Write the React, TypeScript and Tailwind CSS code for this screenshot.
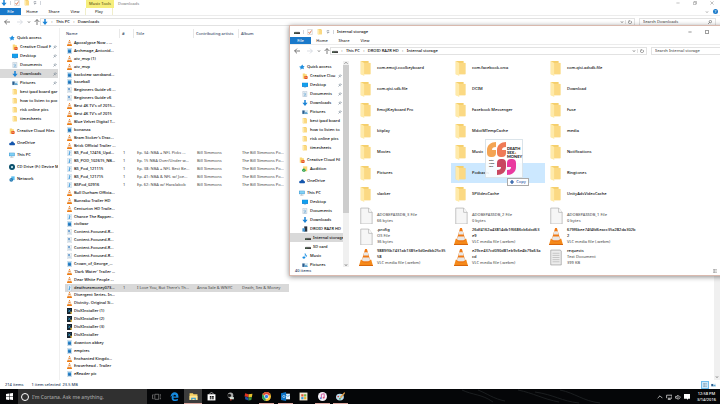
import type { ReactNode } from "react";
import clsx from "clsx";

/* TYPES */
type IconName =
  | "star" | "cloudFolder" | "desktop" | "doc" | "download" | "pictures" | "folder"
  | "onedrive" | "pc" | "cd" | "network" | "audition" | "phone" | "drive" | "music"
  | "vlc" | "image" | "word" | "audio" | "divx" | "check" | "page" | "textPage";

type TreeItem = {
  icon: IconName;
  label: string;
  level?: number;
  pin?: boolean;
  active?: boolean;
  gap?: boolean;
};

type FileRow = {
  icon: IconName;
  name: string;
  title?: string;
  artist?: string;
  album?: string;
  active?: boolean;
};

type Tile = {
  icon: IconName;
  name: string;
  meta?: string[];
  active?: boolean;
};

/* DATA */
const quickAccess: TreeItem[] = [
  { icon: "star", label: "Quick access" },
  { icon: "cloudFolder", label: "Creative Cloud F", level: 1, pin: true },
  { icon: "desktop", label: "Desktop", level: 1, pin: true },
  { icon: "doc", label: "Documents", level: 1, pin: true },
  { icon: "download", label: "Downloads", level: 1, pin: true },
  { icon: "pictures", label: "Pictures", level: 1, pin: true },
  { icon: "folder", label: "best ipad board gar", level: 1 },
  { icon: "folder", label: "how to listen to poc", level: 1 },
  { icon: "folder", label: "risk online pics", level: 1 },
  { icon: "folder", label: "timesheets", level: 1 },
  { icon: "cloudFolder", label: "Creative Cloud Files", gap: true },
];

const downloadsTree: TreeItem[] = [
  ...quickAccess.map((item) => ({ ...item, active: item.label === "Downloads" })),
  { icon: "onedrive", label: "OneDrive", gap: true },
  { icon: "pc", label: "This PC", gap: true },
  { icon: "cd", label: "CD Drive (F:) Device M", gap: true },
  { icon: "network", label: "Network", gap: true },
];

const shortLabels: Record<string, string> = {
  "Creative Cloud F": "Creative Clou",
  "best ipad board gar": "best ipad board",
  "how to listen to poc": "how to listen to",
  "Creative Cloud Files": "Creative Cloud Fil",
};

const storageTree: TreeItem[] = [
  ...quickAccess.map((item) => ({ ...item, label: shortLabels[item.label] ?? item.label })),
  { icon: "audition", label: "Audition", level: 1 },
  { icon: "onedrive", label: "OneDrive", gap: true },
  { icon: "pc", label: "This PC", gap: true },
  { icon: "desktop", label: "Desktop", level: 1 },
  { icon: "doc", label: "Documents", level: 1 },
  { icon: "download", label: "Downloads", level: 1 },
  { icon: "phone", label: "DROID RAZR HD", level: 1 },
  { icon: "drive", label: "Internal storage", level: 2, active: true },
  { icon: "drive", label: "SD card", level: 2 },
  { icon: "music", label: "Music", level: 1 },
  { icon: "pictures", label: "Pictures", level: 1 },
];

const files: FileRow[] = [
  { icon: "vlc", name: "Apocalypse Now - ..." },
  { icon: "image", name: "Archmage_Antonid..." },
  { icon: "vlc", name: "atv_mvp (1)" },
  { icon: "vlc", name: "atv_mvp" },
  { icon: "image", name: "backview sansband..." },
  { icon: "image", name: "baseball" },
  { icon: "word", name: "Beginners Guide v6 ..." },
  { icon: "word", name: "Beginners Guide v6" },
  { icon: "vlc", name: "Best 4K TV's of 2015..." },
  { icon: "vlc", name: "Best 4K TV's of 2015" },
  { icon: "vlc", name: "Blue Velvet Digital T..." },
  { icon: "image", name: "bonanza" },
  { icon: "vlc", name: "Bram Stoker's Drac..." },
  { icon: "vlc", name: "Brick Official Trailer ..." },
  { icon: "audio", name: "BS_Pod_12416_Upd...", title: "Ep. 34: NBA + NFL Picks ...", artist: "Bill Simmons", album: "The Bill Simmons Po..." },
  { icon: "audio", name: "BS_POD_102615_NB...", title: "Ep. 15 NBA Over/Under w...", artist: "Bill Simmons", album: "The Bill Simmons Po..." },
  { icon: "audio", name: "BS_Pod_121115", title: "Ep. 38: NBA + NFL Best Be...", artist: "Bill Simmons", album: "The Bill Simmons Po..." },
  { icon: "audio", name: "BS_Pod_121715", title: "Ep. 41: NBA & NFL w/ Joe...", artist: "Bill Simmons", album: "The Bill Simmons Po..." },
  { icon: "audio", name: "BSPod_02916", title: "Ep. 62: NBA w/ Haralabob", artist: "Bill Simmons", album: "The Bill Simmons Po..." },
  { icon: "vlc", name: "Bull Durham Officia..." },
  { icon: "vlc", name: "Bunraku Trailer HD" },
  { icon: "vlc", name: "Centurion HD Traile..." },
  { icon: "audio", name: "Chance The Rapper..." },
  { icon: "image", name: "civilwar" },
  { icon: "word", name: "Content-Focused-R..." },
  { icon: "word", name: "Content-Focused-R..." },
  { icon: "word", name: "Content-Focused-R..." },
  { icon: "word", name: "Content-Focused-R..." },
  { icon: "image", name: "Crown_of_George_..." },
  { icon: "vlc", name: "'Dark Water' Trailer ..." },
  { icon: "vlc", name: "Dear White People ..." },
  { icon: "audio", name: "deathsexmoney073...", title: "I Love You, But There's Th...", artist: "Anna Sale & WNYC", album: "Death, Sex & Money", active: true },
  { icon: "vlc", name: "Divergent Series- In..." },
  { icon: "vlc", name: "Divinity- Original Si..." },
  { icon: "divx", name: "DivXInstaller (1)" },
  { icon: "divx", name: "DivXInstaller (2)" },
  { icon: "divx", name: "DivXInstaller (3)" },
  { icon: "divx", name: "DivXInstaller" },
  { icon: "image", name: "downton abbey" },
  { icon: "image", name: "empires" },
  { icon: "vlc", name: "Enchanted Kingdo..." },
  { icon: "vlc", name: "Eraserhead - Trailer" },
  { icon: "image", name: "eReader pic" },
];

const tiles: Tile[] = [
  { icon: "folder", name: "com.emoji.coolkeyboard" },
  { icon: "folder", name: "com.facebook.orca" },
  { icon: "folder", name: "com.qisi.adsdk.file" },
  { icon: "folder", name: "com.qisi.sdk.file" },
  { icon: "folder", name: "DCIM" },
  { icon: "folder", name: "Download" },
  { icon: "folder", name: "EmojiKeyboard Pro" },
  { icon: "folder", name: "Facebook Messenger" },
  { icon: "folder", name: "Fuse" },
  { icon: "folder", name: "kitplay" },
  { icon: "folder", name: "MdotMTempCache" },
  { icon: "folder", name: "media" },
  { icon: "folder", name: "Movies" },
  { icon: "folder", name: "Music" },
  { icon: "folder", name: "Notifications" },
  { icon: "folder", name: "Pictures" },
  { icon: "folder", name: "Podcasts", active: true },
  { icon: "folder", name: "Ringtones" },
  { icon: "folder", name: "slacker" },
  { icon: "folder", name: "SPVideoCache" },
  { icon: "folder", name: "UnityAdsVideoCache" },
  { icon: "page", name: "", meta: ["ADOBEPASSDB_3 File", "66 bytes"] },
  { icon: "page", name: "", meta: ["ADOBEPASSDB_2 File", "0 bytes"] },
  { icon: "page", name: "", meta: ["ADOBEPASSDB_1 File", "0 bytes"] },
  { icon: "page", name: ".profig", meta: ["OS File", "36 bytes"] },
  { icon: "vlc", name: "26df4162a43814db1f6686cb6dcd63\ne9", meta: ["VLC media file (.webm)"] },
  { icon: "vlc", name: "679f6bee74f4fd6eacc35a282da302b\n2", meta: ["VLC media file (.webm)"] },
  { icon: "vlc", name: "9889f3b7431ab1385e3d0edbb25c35\n58", meta: ["VLC media file (.webm)"] },
  { icon: "vlc", name: "e29ce437cd090d81eb9c6e4b79a63a\ncd", meta: ["VLC media file (.webm)"] },
  { icon: "textPage", name: "requests", meta: ["Text Document", "399 KB"] },
];

/* ICONS */
const glyphs: Record<IconName, ReactNode> = {
  star: <path d="M9 1l2 4 4 1-3 3 1 5-5-2-4 3 0-5-4-3 5-1z" fill="#1f8fe0" />,
  cloudFolder: (
    <>
      <path d="M2 1h6l1 2h4v12H2z" fill="#fbd774" />
      <rect x="6" y="8" width="9" height="8" rx="2" fill="#e8541c" />
      <path d="M8 13c0-3 3-3 5 0" stroke="#fff" fill="none" />
    </>
  ),
  desktop: (
    <>
      <rect y="2" width="16" height="11" fill="#1085d8" />
      <path d="M1 3h14v8H1z" fill="#12a0ee" />
      <path d="M5 14h6" stroke="#2673ae" />
    </>
  ),
  doc: (
    <>
      <path d="M2 1h11v14H2z" fill="#e9eff4" stroke="#9fb2c2" />
      <path d="M5 11c5 1 6-5 3-6-4 0-3 4 2 5M5 13h6" stroke="#3c8ec9" fill="none" />
    </>
  ),
  download: <path d="M6 0h4v7h5l-7 9-7-9h5z" fill="#1c84d6" />,
  pictures: (
    <>
      <path d="M0 3h16v11H0z" fill="#d7e8f2" />
      <path d="M1 4h6v9H1z" fill="#2b5d8e" />
      <path d="M7 10l4-3 4 4v2H7z" fill="#5ba4cf" />
    </>
  ),
  folder: (
    <>
      <path d="M2 0h9v2h2v12H2z" fill="#f5cf6b" />
      <path d="M6 2h7v12H6z" fill="#fbd983" />
      <path d="M2 0l4 2v14l-4-2z" fill="#ffeaa9" />
    </>
  ),
  onedrive: <path d="M1 13c-2-5 3-6 4-5 1-5 7-5 8 0 4 0 4 6 0 6H3z" fill="#1556ad" />,
  pc: (
    <>
      <path d="M0 2h15v9H0z" fill="#2d8bc9" />
      <path d="M1 3h13v7H1z" fill="#82d0f4" />
      <path d="M3 14h9M7 11v3" stroke="#6d8190" />
    </>
  ),
  cd: (
    <>
      <circle cx="8" cy="8" r="8" fill="#094f6b" />
      <circle cx="8" cy="8" r="3" fill="#c9e7ef" />
    </>
  ),
  network: (
    <>
      <path d="M6 1h9v10H6z" fill="#58bdef" />
      <circle cx="6" cy="10" r="5" fill="#2a7cb4" />
      <path d="M3 8c3 0 3 4 5 4" stroke="#b9e4f8" fill="none" />
    </>
  ),
  audition: (
    <>
      <path d="M3 1h11v13H3z" fill="#fbd774" />
      <circle cx="5" cy="11" r="4.500" fill="#1f9e43" />
      <path d="M3 11l2 2 3-4" stroke="#fff" fill="none" />
    </>
  ),
  phone: (
    <>
      <path d="M6 1h8v14H6z" fill="#293440" />
      <path d="M1 6h7v9H1z" fill="#4692cb" />
    </>
  ),
  drive: (
    <>
      <path d="M2 7h12l2 3H0z" fill="#b5b5b5" />
      <path d="M0 9h16v4H0z" fill="#242424" />
      <path d="M2 11h4" stroke="#4fd25c" />
    </>
  ),
  music: (
    <>
      <path d="M8 12V1c1 4 6 4 4 9 0-3-2-4-4-4" fill="#198fe3" stroke="#198fe3" />
      <ellipse cx="5" cy="12" rx="4" ry="3" fill="#198fe3" />
    </>
  ),
  vlc: (
    <>
      <path d="M2 10h12l2 6H0z" fill="#f58a1a" />
      <path d="M7 0h2l4 11c-1 3-9 3-10 0z" fill="#f07a16" />
      <path d="M6 3h4l1 3H5zM4.300 8h7.400l1 2.500c-2 1.500-7.400 1.500-9.400 0z" fill="#e9e7e6" />
      <path d="M0 15h16v1H0z" fill="#d9660a" />
    </>
  ),
  image: (
    <>
      <path d="M2 0h12v16H2z" fill="#d5e8f5" stroke="#93b7cf" />
      <path d="M3 4h10v8H3z" fill="#2987cc" />
      <path d="M3 12l4-4 3 2 3-1v3z" fill="#1b62a5" />
    </>
  ),
  word: (
    <>
      <path d="M2 0h12v16H2z" fill="#f3f7fa" stroke="#a6b9c8" />
      <path d="M4 3h5v4H4z" fill="#2a72b9" />
      <path d="M4 9h8M4 12h8" stroke="#6e9dc4" />
    </>
  ),
  audio: (
    <>
      <path d="M2 0h12v16H2z" fill="#e2eff8" stroke="#a5bfd2" />
      <path d="M8 11V4l3 2" stroke="#2d91d7" strokeWidth="2" fill="none" />
      <circle cx="7" cy="11" r="2" fill="#2d91d7" />
    </>
  ),
  divx: (
    <>
      <path d="M0 0h16v16H0z" fill="#16222d" />
      <path d="M4 4l7 7M11 4l-7 7" stroke="#3ca8db" strokeWidth="2" />
      <path d="M10 10h6v6h-4z" fill="#d9b24b" />
    </>
  ),
  check: (
    <>
      <path d="M2 1h12v14H2z" fill="#fff" stroke="#a5a5a5" />
      <path d="M4 8l3 4 5-8" stroke="#d25c30" strokeWidth="2" fill="none" />
    </>
  ),
  page: (
    <>
      <path d="M2 1h9l4 4v11H2z" fill="#f6f6f6" stroke="#aaa" strokeWidth=".7" />
      <path d="M11 1v4h4" fill="#fff" stroke="#aaa" strokeWidth=".7" />
    </>
  ),
  textPage: (
    <>
      <path d="M2 1h11l1 1v13H2z" fill="#ededed" stroke="#999" strokeWidth=".7" />
      <path d="M4 4h8M4 6h8M4 8h8M4 10h8M4 12h8" stroke="#bbb" strokeWidth=".8" />
    </>
  ),
};

function Icon({ name, className = "size-1.5" }: { name: IconName; className?: string }) {
  return (
    <svg viewBox="0 0 16 16" preserveAspectRatio="none" className={clsx("shrink-0", className)} aria-hidden="true">
      {glyphs[name]}
    </svg>
  );
}

function Stroke({ d, className = "size-1.5" }: { d: string; className?: string }) {
  return (
    <svg viewBox="0 0 10 10" className={clsx("shrink-0", className)} fill="none" stroke="currentColor" strokeWidth="1.3" aria-hidden="true">
      <path d={d} />
    </svg>
  );
}

const BACK = "M10 5H1M5 1L1 5l4 4";
const FORWARD = "M0 5h9M5 1l4 4-4 4";
const UP = "M5 10V1M1 5l4-4 4 4";
const DOWN = "M2 3l3 4 3-4";
const CARET_UP = "M1 7l4-4 4 4";
const REFRESH = "M7 2a4 4 0 1 1-4 0M3 0v3h3";

/* WINDOW PARTS */
function QuickBar({ icon }: { icon: IconName }) {
  return (
    <div className="flex items-center gap-[3px]">
      <button aria-label="Window menu" className="flex"><Icon name={icon} /></button>
      <span className="h-1 w-px bg-gray-300" />
      <button aria-label="Properties" className="flex"><Icon name="check" /></button>
      <button aria-label="New folder" className="ml-px flex"><Icon name="folder" /></button>
      <button aria-label="Customize" className="flex text-gray-700"><Stroke d="M2 2h6M2 5l3 3 3-3" className="size-1" /></button>
      <span className="h-1 w-px bg-gray-300" />
    </div>
  );
}

function Ribbon({ children }: { children?: ReactNode }) {
  return (
    <nav className="flex h-2 shrink-0 items-stretch border-b border-[#ececec] text-[#333]">
      <button className="w-[21px] bg-[#1979ca] text-white">File</button>
      <button className="w-[22px]">Home</button>
      <button className="w-[22px]">Share</button>
      <button className="w-5">View</button>
      {children}
    </nav>
  );
}

function AddressBar({ icon, path, search }: { icon: IconName; path: string[]; search: string }) {
  return (
    <div className="flex h-3 shrink-0 items-center">
      <div className="flex w-10 shrink-0 items-center gap-[3px] pl-1 text-[#555]">
        <button aria-label="Back" className="flex"><Stroke d={BACK} /></button>
        <button aria-label="Forward" className="ml-1 flex text-gray-300"><Stroke d={FORWARD} /></button>
        <button aria-label="Recent" className="flex"><Stroke d={DOWN} className="ml-px size-1" /></button>
        <button aria-label="Up" className="flex"><Stroke d={UP} /></button>
      </div>
      <div className="flex h-2 min-w-0 flex-1 items-center border border-[#e2e2e2] pl-px">
        <Icon name={icon} />
        {path.map((part) => (
          <span key={part} className="flex items-center">
            <span className="w-2 text-center text-[#666]">›</span>
            <a href="#" className="text-black">{part}</a>
          </span>
        ))}
        <button aria-label="Previous locations" className="ml-auto flex px-px text-[#555]"><Stroke d={DOWN} className="size-1" /></button>
        <button aria-label="Refresh" className="flex border-l border-[#e2e2e2] px-[2px] text-[#555]"><Stroke d={REFRESH} className="size-1" /></button>
      </div>
      <label className="mx-1 flex h-2 w-[77px] shrink-0 items-center border border-[#e2e2e2] px-[3px]">
        <input aria-label={search} placeholder={search} className="min-w-0 flex-1 outline-none placeholder:text-[#555]" />
        <Stroke d="M6 1a3 3 0 1 1 0 6a3 3 0 1 1 0-6M4 6L0 10" className="size-1 text-[#444]" />
      </label>
    </div>
  );
}

function Tree({ items }: { items: TreeItem[] }) {
  return (
    <ul className="min-w-0 flex-1 overflow-hidden pt-[5px] text-black">
      {items.map((item, i) => (
        <li
          key={i}
          className={clsx(
            "flex h-[9px] items-center gap-0.5 whitespace-nowrap",
            item.gap && "mt-[3px]",
            item.active && "bg-[#d9d9d9]",
            item.level === 2 ? "pl-[15px]" : item.level === 1 ? "pl-3" : "pl-[9px]"
          )}
        >
          <Icon name={item.icon} />
          <a href="#" className="min-w-0 flex-1">{item.label}</a>
          {item.pin && <Stroke d="M5 1l4 4M6 2L3 5M8 4L5 7M2 4l4 4M4 6L1 9" className="mr-px -ml-2 size-1 text-[#68798a]" />}
        </li>
      ))}
    </ul>
  );
}

function DownloadsWindow() {
  return (
    <section className="flex min-h-0 flex-1 flex-col overflow-hidden bg-white">
      <header className="flex h-2 shrink-0 pl-px">
        <div className="flex w-[85px] items-center pb-0.5"><QuickBar icon="download" /></div>
        <span className="w-7 bg-[#f6ee7c] text-center leading-[7px] whitespace-nowrap text-[#5c5616]">Music Tools</span>
        <h1 className="pl-1 leading-[7px] text-[#888]">Downloads</h1>
        <div className="ml-auto flex w-[51px] items-center justify-around pb-0.5 text-[#888]">
          <button aria-label="Minimize"><Stroke d="M1 5h8" className="size-1" /></button>
          <button aria-label="Restore"><Stroke d="M1 3h6v6H1zM3 3V1h6v6H7" className="size-1" /></button>
          <button aria-label="Close"><Stroke d="M1 1l8 8M9 1L1 9" className="size-1" /></button>
        </div>
      </header>
      <Ribbon>
        <button className="w-7 border-x border-[#f0eecb]">Play</button>
        <button aria-label="Expand ribbon" className="ml-auto text-[#888]"><Stroke d={DOWN} className="mr-1 size-1" /></button>
        <button aria-label="Help" className="mr-0.5 size-[5px] self-center rounded-full bg-[#1979ca] leading-[5px] text-white">?</button>
      </Ribbon>
      <AddressBar icon="download" path={["This PC", "Downloads"]} search="Search Downloads" />

      <div className="flex min-h-0 flex-1">
        <aside className="flex w-[60px] shrink-0 border-r border-[#f0f0f0] pr-px">
          <Tree items={downloadsTree} />
        </aside>

        <table className="ml-[5px] flex min-w-0 flex-1 flex-col overflow-hidden pb-0.5 text-left">
          <thead className="block shrink-0 text-[#3b4c68]">
            <tr className="grid h-[11px] grid-cols-[55px_14px_60px_45px_1fr] items-center leading-[9px] whitespace-nowrap">
              <th className="border-r border-[#e8e8e8] pl-px font-medium">Name</th>
              <th className="border-r border-[#e8e8e8] pl-0.5 font-medium">#</th>
              <th className="border-r border-[#e8e8e8] pl-0.5 font-medium">Title</th>
              <th className="border-r border-[#e8e8e8] pl-0.5 font-medium">Contributing artists</th>
              <th className="pl-0.5 font-medium">Album</th>
            </tr>
          </thead>
          <tbody className="flex min-h-0 flex-1 flex-col">
            {files.map((file, i) => (
              <tr
                key={i}
                className={clsx(
                  "grid min-h-0 flex-1 grid-cols-[55px_14px_60px_45px_50px] items-center whitespace-nowrap text-[#5c5c5c]",
                  file.active && "w-[224px] bg-[#d9d9d9]"
                )}
              >
                <td className="flex items-center gap-[2px] pl-[2px] text-black">
                  <Icon name={file.icon} className="h-1.5 w-[5px]" />
                  {file.name}
                </td>
                <td className="pl-[3px]">{file.title && "1"}</td>
                <td className="pl-[3px]">{file.title}</td>
                <td className="pl-[3px]">{file.artist}</td>
                <td className="pl-[3px]">{file.album}</td>
              </tr>
            ))}
          </tbody>
        </table>

        <div className="flex w-1.5 shrink-0 flex-col items-center justify-end bg-[#f0f0f0] pb-px text-[#555]">
          <Stroke d={DOWN} className="size-1" />
        </div>
      </div>

      <footer className="flex h-[9px] shrink-0 items-center gap-2 pr-1 pl-[5px] text-[#24395a]">
        <span>214 items</span>
        <span>1 item selected&nbsp; 23.5 MB</span>
        <button aria-label="Details view" className="ml-auto flex border border-[#70bdec] bg-[#cbe8fb] p-px"><Stroke d="M0 1h10M0 5h10M0 9h10M3 0v10" className="size-1 text-[#8199a8]" /></button>
        <button aria-label="Large icons" className="-ml-1.5 flex"><Icon name="pictures" className="h-1 w-[5px]" /></button>
      </footer>
    </section>
  );
}

function DragPreview() {
  return (
    <div className="absolute top-[113px] left-[195px] h-[39px] w-[38px] border border-[#dbe4ea] bg-white/85">
      <svg viewBox="0 0 36 37" className="size-full" aria-hidden="true">
        <path d="M10 2v5c-3 0-4 1-4 3h4v3a4 4 0 0 1-4 4h-1a4 4 0 0 1-4-4V10c0-5 4-8 9-8z" fill="#f4a454" />
        <path d="M20 2v5c-3 0-4 1-4 3h4v3a4 4 0 0 1-4 4h-1a4 4 0 0 1-4-4V10c0-5 4-8 9-8z" fill="#ef7a56" />
        <path d="M11 35v-5c3 0 4-1 4-3h-4v-4a4 4 0 0 1 4-4h1a4 4 0 0 1 4 4v4c0 5-4 8-9 8z" fill="#c84860" />
        <path d="M21 35v-5c3 0 4-1 4-3h-4v-4a4 4 0 0 1 4-4h1a4 4 0 0 1 4 4v4c0 5-4 8-9 8z" fill="#e93aa0" />
      </svg>
      <p className="absolute top-[7px] left-[21px] font-[Lato] text-[4px] leading-[4px] font-black text-[#222]">DEATH<br />SEX<span className="text-[#f08a3c]">+</span><br />MONEY</p>
      <p className="absolute top-[19px] left-[3px] text-[2px] leading-[3px] font-bold text-[#222]">with<br />Anna<br />Sale</p>
      <span className="absolute top-[38px] left-[21px] flex h-2 w-[22px] items-center justify-center gap-0.5 border border-[#aaa] bg-white text-[#1f52a5]">
        <Stroke d="M5 0v10M0 5h10" className="size-1 stroke-3 text-[#164f9f]" />
        Copy
      </span>
    </div>
  );
}

function StorageWindow() {
  return (
    <section className="absolute top-[25px] -right-[13px] left-[289px] flex flex-col border border-[#d9b9ae] bg-white shadow-[0_1px_5px_rgba(0,0,0,0.45)]">
      <header className="flex h-[11px] shrink-0 items-center pl-1">
        <QuickBar icon="drive" />
        <h2 className="pl-[3px] text-black">Internal storage</h2>
        <div className="ml-auto flex w-[51px] items-center justify-around text-[#333]">
          <button aria-label="Minimize"><Stroke d="M1 5h8" className="size-1" /></button>
          <button aria-label="Maximize"><Stroke d="M1 1h8v8H1z" className="size-1" /></button>
          <button aria-label="Close"><Stroke d="M1 1l8 8M9 1L1 9" className="size-1" /></button>
        </div>
      </header>
      <Ribbon />
      <AddressBar icon="drive" path={["This PC", "DROID RAZR HD", "Internal storage"]} search="Search Internal storage" />

      <div className="flex h-[210px]">
        <aside className="flex w-[59px] shrink-0">
          <Tree items={storageTree} />
          <div className="mt-1 flex w-1.5 shrink-0 flex-col items-center bg-[#f0f0f0] text-[#444]">
            <Stroke d={CARET_UP} className="size-1" />
            <span className="h-[148px] w-full bg-[#cdcdcd]" />
            <Stroke d={DOWN} className="mt-auto size-1" />
          </div>
        </aside>

        <ul className="ml-[7px] grid auto-rows-[20px] grid-cols-[repeat(3,94px)] content-start gap-px pt-[1px]">
          {tiles.map((tile, i) => (
            <li
              key={i}
              className={clsx("flex items-center gap-1 pl-[3px]", tile.active && "bg-[#cce8ff]")}
            >
              <Icon name={tile.icon} className={tile.icon === "folder" ? "h-[15px] w-[14px]" : "h-[17px] w-[14px]"} />
              <div className="leading-[6px] whitespace-pre text-[#5c5c5c]">
                <p className="min-h-1.5 text-black">{tile.name}</p>
                {tile.meta?.map((line) => <p key={line}>{line}</p>)}
              </div>
            </li>
          ))}
        </ul>
      </div>
      <footer className="flex h-2 items-center pr-[15px] pl-[5px] text-[#24395a]">
        40 items
        <Stroke d="M0 1h10M0 5h10M0 9h10M3 0v10" className="ml-auto size-1 text-[#888]" />
      </footer>
      <DragPreview />
    </section>
  );
}

/* TASKBAR */
const apps: { label: string; open?: boolean; active?: boolean; art: ReactNode }[] = [
  { label: "Task View", art: <path d="M5 4h7v9H5zM3 5H1v7h2M14 5h2v7h-2" stroke="#aaa" fill="none" /> },
  { label: "Edge", art: <path d="M1 9c0-11 14-11 14-1v2H6c0 4 5 4 8 2v3C7 18 2 15 3 9c1-3 3-4 5-4-2 1-2 2-2 3h5C11 3 4 4 1 9z" fill="#168be0" /> },
  {
    label: "File Explorer",
    active: true,
    open: true,
    art: <><path d="M1 2h6l1 2h7v10H1z" fill="#f6d165" /><path d="M1 7h14v7H1z" fill="#ffe795" /><path d="M4 14v-4h8v4h-2v-2H6v2z" fill="#2697d8" /></>,
  },
  { label: "Store", art: <><path d="M1 4h14v11H1z" fill="#fff" /><path d="M5 4c0-4 6-4 6 0" stroke="#fff" fill="none" /><path d="M5 7h3v3H5zM9 7h3v3H9zM5 11h3v2H5zM9 11h3v2H9z" fill="#111" /></> },
  { label: "Game", art: <><circle cx="8" cy="6" r="5" fill="#aaa" /><circle cx="6" cy="6" r="3" fill="#171717" /><path d="M7 9h7v4H7z" fill="#d6dfd6" /><path d="M7 14h3" stroke="#d94232" strokeWidth="2" /></> },
  { label: "Media Player", art: <><path d="M2 2l6 2v5L1 8z" fill="#e13424" /><path d="M8 4l7-1-1 6-6 1z" fill="#e8c22f" /><path d="M2 8l6 2v5l-6-2z" fill="#234fa9" /><path d="M8 10l6-1-1 5-5 1z" fill="#3d913c" /></> },
  {
    label: "Chrome",
    open: true,
    art: <><circle cx="8" cy="8" r="8" fill="#f8c537" /><path d="M8 8L1 4c4-6 12-5 14 1z" fill="#dd4b39" /><path d="M1 4l6 6-1 6C0 15-1 8 1 4z" fill="#28a15b" /><circle cx="8" cy="8" r="4" fill="#fff" /><circle cx="8" cy="8" r="3" fill="#397fe3" /></>,
  },
  { label: "Outlook", open: true, art: <><path d="M7 3h9v10H7z" fill="#e4f2fb" /><path d="M0 2l9-2v16l-9-2z" fill="#0872c6" /><circle cx="5" cy="8" r="2" stroke="#fff" fill="none" /><path d="M9 5l3 3 4-3" stroke="#0872c6" fill="none" /></> },
  { label: "Calendar", art: <><path d="M1 1h14v14H1z" fill="#f4ecd9" /><path d="M4 4h4v4H4z" fill="#e05734" /><path d="M9 4h4v4H9z" fill="#79b342" /><path d="M4 9h4v4H4z" fill="#3b9ed9" /><path d="M9 9h4v4H9z" fill="#eab630" /></> },
  { label: "iTunes", open: true, art: <><circle cx="8" cy="8" r="8" fill="#f4f1f7" /><path d="M6 11V4l5-1v7" stroke="#cd4e99" strokeWidth="1.500" fill="none" /><circle cx="5" cy="11" r="1.700" fill="#5b8bdc" /><circle cx="10" cy="10" r="1.700" fill="#e64e76" /></> },
  { label: "Paint", open: true, art: <><ellipse cx="7" cy="9" rx="7" ry="6" fill="#b9daec" /><circle cx="4" cy="8" r="1.500" fill="#d74434" /><circle cx="7" cy="12" r="1.500" fill="#379c48" /><path d="M7 9l8-9 1 2-7 9z" fill="#e29d46" /></> },
];

function Taskbar() {
  return (
    <footer className="relative flex h-[15px] shrink-0 items-stretch overflow-hidden bg-[#050608]">
      <svg viewBox="0 0 720 15" preserveAspectRatio="none" className="absolute inset-0 size-full" fill="none" stroke="#1b1e20" aria-hidden="true">
        <path d="M462 1c10 5 20 4 31 12M478 1c8 3 16 9 27 11M518 1c15 3 25 9 41 12M560 1c15 3 23 11 40 13M535 3c20 3 26 9 44 11" />
      </svg>
      <button aria-label="Start" className="relative flex w-[18px] items-center justify-center">
        <svg viewBox="0 0 14 14" className="size-[7px]" fill="#fff"><path d="M0 2l6-1v6H0zM7 1l7-1v7H7zM0 8h6v6l-6-1zM7 8h7v6l-7-1z" /></svg>
      </button>
      <label className="relative flex w-[129px] items-center gap-[3px] bg-[#303030] pl-[3px]">
        <span className="size-2 rounded-full border border-white" />
        <input aria-label="Search" placeholder="I'm Cortana. Ask me anything." className="min-w-0 flex-1 text-[5px] outline-none placeholder:text-[#a2a2a2]" />
      </label>
      <div className="relative flex w-[203px]">
        {apps.map((app) => (
          <button
            key={app.label}
            aria-label={app.label}
            className={clsx("flex flex-1 flex-col items-center", app.active && "bg-[#3c3c3c]")}
          >
            <svg viewBox="0 0 16 16" className="mt-[3px] size-[9px]">{app.art}</svg>
            {app.open && <span className={clsx("mt-auto h-px bg-[#dba79f]", app.active ? "w-full" : "w-[15px]")} />}
          </button>
        ))}
      </div>
      <div className="relative ml-auto flex items-center gap-[3px] pr-1 text-[#ddd]">
        <button aria-label="Hidden icons"><Stroke d={CARET_UP} /></button>
        <button aria-label="Network"><Stroke d="M1 2h9v5H3M5 7v2M3 9h5M1 2v5" /></button>
        <button aria-label="Volume"><Stroke d="M1 4h2l2-2v7L3 7H1zM7 3c2 2 2 3 0 5" /></button>
        <button aria-label="Notifications"><svg viewBox="0 0 10 10" className="size-1.5" fill="#fff"><path d="M0 0h10v8H7l-2 2V8H0z" /></svg></button>
        <time className="ml-1 text-center leading-[6px] text-white">12:58 PM<br />3/14/2016</time>
      </div>
    </footer>
  );
}

export default function App() {
  return (
    <main className="relative flex h-screen w-full flex-col overflow-hidden bg-white font-['Noto_Sans','Open_Sans',sans-serif] text-[4px] leading-[6px] font-medium">
      <DownloadsWindow />
      <StorageWindow />
      <Taskbar />
    </main>
  );
}
